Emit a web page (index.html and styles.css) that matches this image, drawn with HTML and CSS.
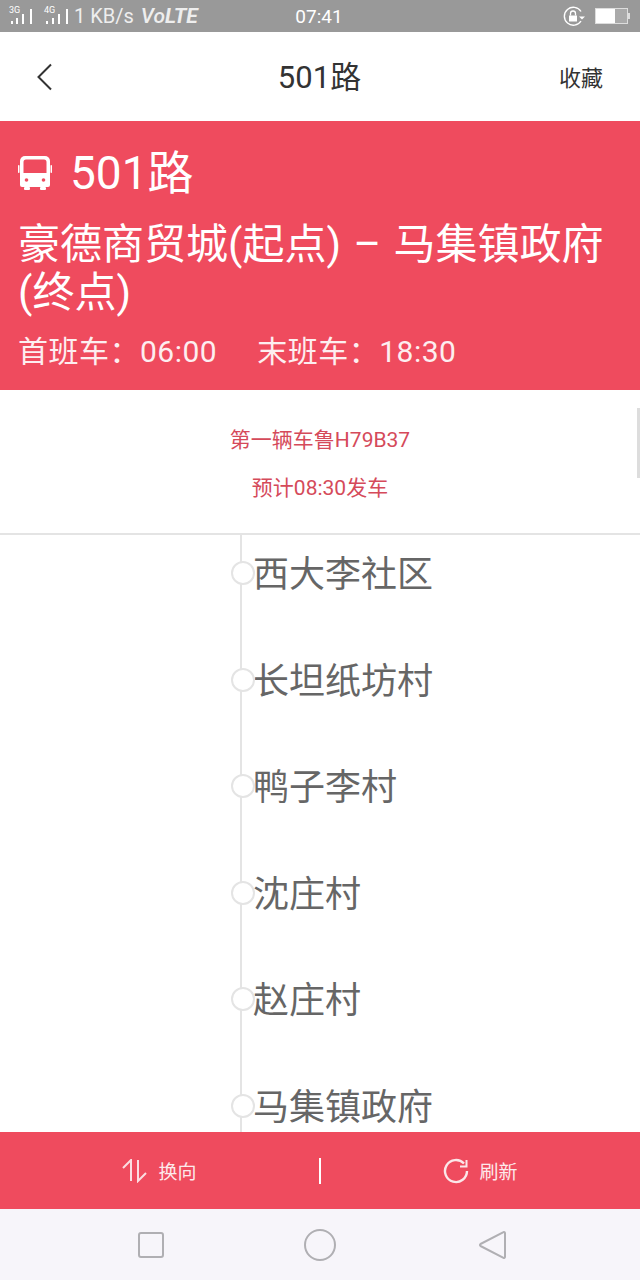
FILE: index.html
```html
<!DOCTYPE html>
<html lang="zh-CN">
<head>
    <meta charset="UTF-8">
    <meta name="viewport" content="width=device-width, initial-scale=1.0">
    <title>501路</title>
    <link rel="stylesheet" href="styles.css">
</head>
<body>
    <div class="statusbar">
        <div class="status-left">
            <svg class="signal" width="30" height="20" viewBox="0 0 30 20">
                <text x="1" y="7" class="sim-label">3G</text>
                <rect x="3" y="15" width="2" height="3"/>
                <rect x="8" y="12" width="2" height="6"/>
                <rect x="14" y="8" width="2" height="10"/>
                <rect x="22" y="3" width="2" height="15"/>
            </svg>
            <svg class="signal" width="28" height="20" viewBox="0 0 28 20">
                <text x="2" y="7" class="sim-label">4G</text>
                <rect x="4" y="15" width="2" height="3"/>
                <rect x="10" y="12" width="2" height="6"/>
                <rect x="16" y="8" width="2" height="10"/>
                <rect x="24" y="3" width="2" height="15"/>
            </svg>
            <span>1 KB/s</span>
            <span class="volte">Vo<b>LTE</b></span>
        </div>
        <div class="status-time">07:41</div>
        <div class="status-right">
            <svg width="24" height="20" viewBox="0 0 24 20" fill="none" stroke="#fff">
                <path d="M18 15a9 9 0 1 1 0-9.500" stroke-width="1.400"/>
                <path d="M16 10.500h6l-3 3z" fill="#fff" stroke="none"/>
                <rect x="6" y="9.500" width="8" height="6" fill="#fff" stroke="none"/>
                <path d="M7.500 9.500v-2a2.500 2.500 0 0 1 5 0v2" stroke-width="1.300"/>
            </svg>
            <div class="battery"><div class="battery-fill"></div></div>
            <div class="battery-tip"></div>
        </div>
    </div>

    <div class="topbar">
        <svg class="back" width="18" height="28" viewBox="0 0 18 28" fill="none" stroke="#333" stroke-width="2">
            <path d="M15 1.500 2.500 14 15 26.500"/>
        </svg>
        <h1>501路</h1>
        <span class="fav">收藏</span>
    </div>

    <div class="route-card">
        <div class="route-name">
            <svg width="34" height="36" viewBox="0 0 34 36" fill="#fff">
                <path d="M7 1h20a5 5 0 0 1 5 5v24a2 2 0 0 1-2 2H4a2 2 0 0 1-2-2V6a5 5 0 0 1 5-5z"/>
                <rect x="6" y="32" width="6" height="3" rx="1"/>
                <rect x="22" y="32" width="6" height="3" rx="1"/>
                <rect x="0" y="10" width="1.500" height="8" rx="0.700"/>
                <rect x="32.500" y="10" width="1.500" height="8" rx="0.700"/>
                <path d="M8 4.500h18a2.500 2.500 0 0 1 2.500 2.500v11h-23V7A2.500 2.500 0 0 1 8 4.500z" fill="#ef4b5e"/>
                <circle cx="8.500" cy="25" r="1.800" fill="#ef4b5e"/>
                <circle cx="25.500" cy="25" r="1.800" fill="#ef4b5e"/>
            </svg>
            <span>501路</span>
        </div>
        <div class="route-ends">豪德商贸城(起点) – 马集镇政府(终点)</div>
        <div class="route-times">
            <span>首班车：06:00</span>
            <span>末班车：18:30</span>
        </div>
    </div>

    <div class="notice">
        <p>第一辆车鲁H79B37</p>
        <p>预计08:30发车</p>
        <div class="scroll-mark"></div>
    </div>

    <ul class="stops">
        <li>西大李社区</li>
        <li>长坦纸坊村</li>
        <li>鸭子李村</li>
        <li>沈庄村</li>
        <li>赵庄村</li>
        <li>马集镇政府</li>
    </ul>

    <div class="actions">
        <div class="action">
            <svg width="26" height="24" viewBox="0 0 26 24" fill="none" stroke="#fbdde1" stroke-width="2">
                <path d="M1 9 9 1v21"/>
                <path d="M16 1v21l8-8"/>
            </svg>
            <span>换向</span>
        </div>
        <div class="action-sep"></div>
        <div class="action">
            <svg width="26" height="26" viewBox="0 0 26 26" fill="none" stroke="#fbe7e9" stroke-width="2.400">
                <path d="M21 5.500A11 11 0 1 0 24 13"/>
                <path d="M23.500 2v6.500H17" stroke-width="2"/>
            </svg>
            <span>刷新</span>
        </div>
    </div>

    <div class="navbar">
        <svg width="26" height="26" viewBox="0 0 26 26" fill="none" stroke="#b0afb3" stroke-width="2">
            <rect x="1" y="1" width="24" height="24" rx="2"/>
        </svg>
        <svg width="32" height="32" viewBox="0 0 32 32" fill="none" stroke="#b0afb3" stroke-width="2">
            <circle cx="16" cy="16" r="15"/>
        </svg>
        <svg class="nav-back" width="28" height="30" viewBox="0 0 28 30" fill="none" stroke="#b0afb3" stroke-width="2" stroke-linejoin="round">
            <path d="M27 3a1 1 0 0 0-1.500-.8L2.500 14a1.200 1.200 0 0 0 0 2l23 11.800A1 1 0 0 0 27 27z"/>
        </svg>
    </div>
</body>
</html>
```

FILE: styles.css
```css
* {
    margin: 0;
    padding: 0;
    box-sizing: border-box;
}
body {
    width: 640px;
    height: 1280px;
    overflow: hidden;
    display: flex;
    flex-direction: column;
    background-color: #fff;
    font-family: Roboto, "Noto Sans CJK SC", sans-serif;
}
.statusbar {
    height: 32px;
    flex: none;
    background-color: #999;
    color: #fff;
    display: grid;
    grid-template-columns: 1fr auto 1fr;
    align-items: center;
    padding: 0 10px 0 8px;
    font-size: 19px;
}
.status-left {
    display: flex;
    align-items: center;
    gap: 4px;
    font-size: 20px;
    color: #eee;
}
.signal {
    fill: #fff;
}
.sim-label {
    font-size: 9px;
}
.volte {
    margin-left: 3px;
    font-size: 21px;
    font-style: italic;
    font-weight: 500;
}
.volte b {
    font-weight: 700;
}
.status-right {
    display: flex;
    align-items: center;
    justify-content: flex-end;
}
.status-right svg {
    margin-right: 8px;
}
.battery {
    width: 33px;
    height: 16px;
    border: 1px solid #ddd;
    background-color: #aaa;
}
.battery-fill {
    width: 19px;
    height: 100%;
    background-color: #fff;
}
.battery-tip {
    width: 2px;
    height: 6px;
    background-color: #ddd;
}
.topbar {
    height: 89px;
    flex: none;
    display: grid;
    grid-template-columns: 1fr auto 1fr;
    align-items: center;
    padding: 0 37px 0 36px;
    color: #333;
}
.topbar h1 {
    font-size: 31px;
    font-weight: 400;
    line-height: 1;
    padding-top: 2px;
}
.fav {
    justify-self: end;
    font-size: 22px;
    margin-top: -2px;
}
.route-card {
    height: 269px;
    flex: none;
    background-color: #ef4b5e;
    color: #fff;
    padding: 25px 19px 0 18px;
}
.route-name {
    display: flex;
    align-items: center;
    gap: 18px;
    font-size: 46px;
    line-height: 54px;
}
.route-ends {
    margin-top: 21px;
    font-size: 42px;
    line-height: 48px;
    word-spacing: 2px;
}
.route-times {
    display: flex;
    gap: 40px;
    margin-top: 13px;
    font-size: 30px;
    line-height: 44px;
    letter-spacing: 0.5px;
    color: #fdeef0;
}
.notice {
    position: relative;
    height: 145px;
    flex: none;
    border-bottom: 2px solid #e4e4e4;
    padding-top: 26px;
    text-align: center;
    color: #d54a5a;
    font-size: 21px;
    line-height: 48px;
}
.scroll-mark {
    position: absolute;
    right: 0;
    top: 18px;
    width: 3px;
    height: 70px;
    background-color: #ddd;
}
.stops {
    list-style: none;
    flex: 1;
    min-height: 0;
    margin-left: 240px;
    border-left: 2px solid #e4e4e4;
    padding-top: 12px;
}
.stops li {
    position: relative;
    height: 106.6px;
    padding-left: 11px;
    font-size: 36px;
    line-height: 56px;
    color: #666;
}
.stops li::before {
    content: "";
    position: absolute;
    left: -11px;
    top: 14px;
    width: 20px;
    height: 20px;
    border: 2px solid #e4e4e4;
    border-radius: 50%;
    background-color: #fff;
}
.actions {
    height: 77px;
    flex: none;
    display: flex;
    align-items: center;
    background-color: #ef4b5e;
    color: #fde9eb;
    font-size: 19px;
}
.action {
    flex: 1;
    display: flex;
    align-items: center;
    justify-content: center;
    gap: 10px;
}
.action-sep {
    width: 2px;
    height: 26px;
    background-color: #fff;
}
.navbar {
    height: 71px;
    flex: none;
    display: flex;
    justify-content: center;
    align-items: center;
    gap: 140px;
    padding-left: 4px;
    background-color: #f7f5fa;
}
.nav-back {
    margin-left: 2px;
}
```
